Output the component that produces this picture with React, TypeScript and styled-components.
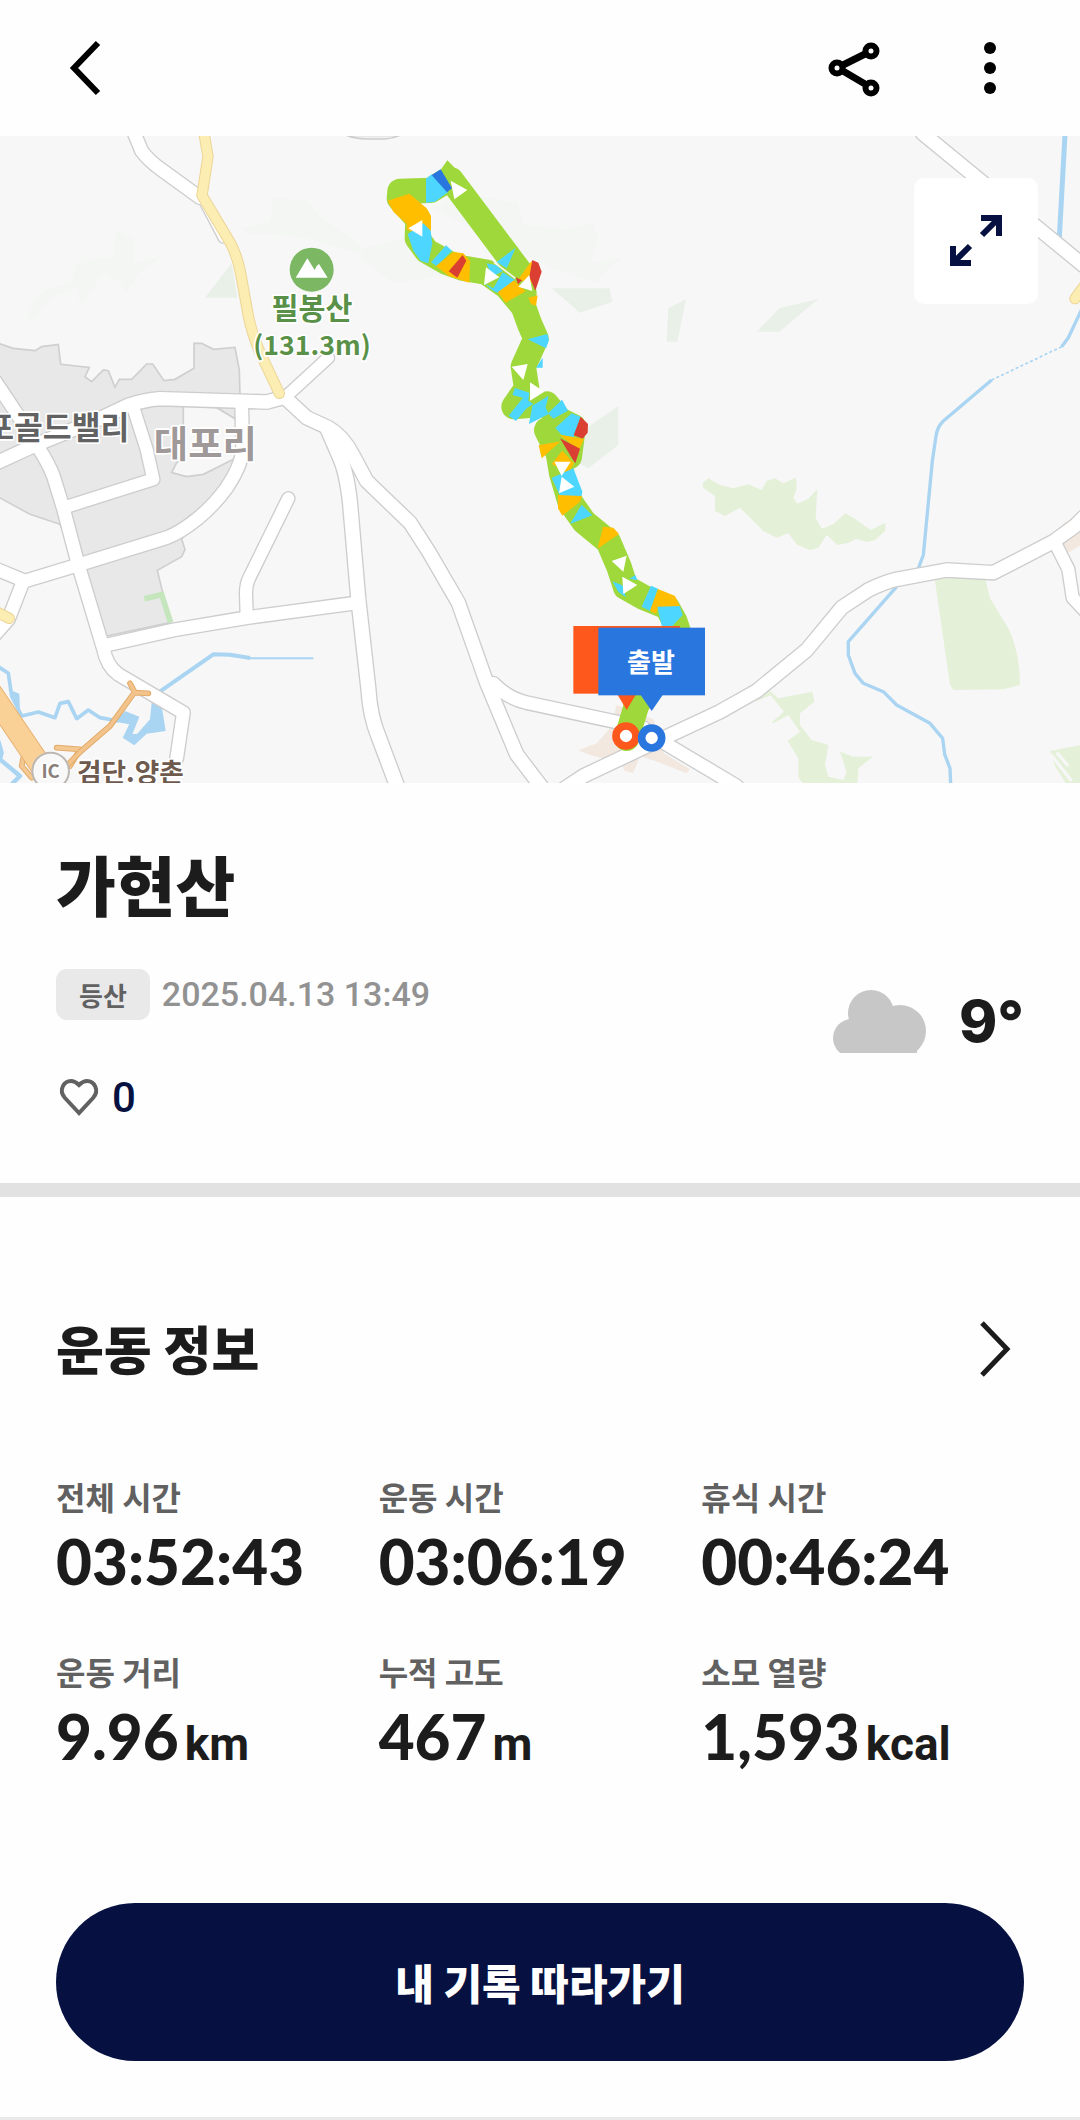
import React from "react";
import styled, { createGlobalStyle } from "styled-components";

const GlobalStyle = createGlobalStyle`
  * { box-sizing: border-box; }
  body {
    margin: 0;
    background: #fefefe;
    color: #1c1c1c;
    font-family: "Noto Sans CJK KR", "Noto Sans", sans-serif;
  }
  h1, h2, p, dl, dt, dd { margin: 0; }
  button {
    border: 0;
    padding: 0;
    background: none;
    color: inherit;
    font: inherit;
    cursor: pointer;
  }
  svg { display: block; }
`;

const Page = styled.div`
  border-bottom: 3px solid #e9e9e9;
`;

const Header = styled.header`
  display: flex;
  align-items: center;
  justify-content: space-between;
  height: 136px;
  padding: 0 56px;
`;

const HeaderActions = styled.div`
  display: flex;
  gap: 72px;
`;

const IconButton = styled.button`
  width: 64px;
  height: 64px;
`;

const MapPanel = styled.section`
  position: relative;
`;

const MapDrawing = styled.svg`
  width: 100%;
  height: auto;
  background: #f7f7f7;
`;

const ExpandButton = styled.button`
  position: absolute;
  top: 42px;
  right: 42px;
  display: grid;
  place-items: center;
  width: 124px;
  height: 126px;
  border-radius: 10px;
  background: #ffffff;
`;

const Summary = styled.section`
  padding: 60px 56px 61px;
  border-bottom: 14px solid #e2e2e2;
`;

const Title = styled.h1`
  font-size: 65px;
  line-height: 80px;
  font-weight: 900;
`;

const SummaryBody = styled.div`
  display: flex;
  justify-content: space-between;
  align-items: flex-start;
  margin-top: 46px;
`;

const MetaRow = styled.div`
  display: flex;
  align-items: center;
  gap: 12px;
`;

const Badge = styled.span`
  padding: 0 23px;
  border-radius: 11px;
  background: #e9e9e9;
  color: #616161;
  font-size: 26px;
  line-height: 51px;
  font-weight: 700;
`;

const DateText = styled.time`
  color: #929292;
  font-family: Roboto, sans-serif;
  font-size: 34px;
  line-height: 51px;
  font-weight: 500;
`;

const LikeButton = styled.button`
  display: flex;
  align-items: center;
  gap: 10px;
  margin-top: 54px;
  color: #061141;
  font-family: Roboto, sans-serif;
  font-size: 42px;
  line-height: 48px;
  font-weight: 500;
`;

const Weather = styled.div`
  display: flex;
  align-items: center;
  gap: 32px;
  padding-top: 20px;
  font-family: Inter, sans-serif;
  font-size: 58px;
  line-height: 64px;
  font-weight: 800;
`;

const Workout = styled.section`
  padding: 121px 56px 56px;
`;

const WorkoutHead = styled.div`
  display: flex;
  align-items: center;
  justify-content: space-between;
`;

const Heading = styled.h2`
  font-size: 52px;
  line-height: 60px;
  font-weight: 900;
`;

const MoreButton = styled.button`
  width: 60px;
  height: 60px;
`;

const Stats = styled.dl`
  display: grid;
  grid-template-columns: repeat(3, 1fr);
  row-gap: 55px;
  margin-top: 95px;
`;

const StatLabel = styled.dt`
  color: #616161;
  font-size: 32px;
  line-height: 46px;
  font-weight: 700;
`;

const StatValue = styled.dd`
  display: flex;
  align-items: baseline;
  gap: 6px;
  height: 64px;
  margin-top: 10px;
  font-family: Lato, sans-serif;
  font-size: 62px;
  line-height: 64px;
  font-weight: 900;
`;

const Unit = styled.span`
  font-family: Roboto, sans-serif;
  font-size: 46px;
  line-height: 48px;
  font-weight: 700;
`;

const FollowButton = styled.button`
  width: 100%;
  margin-top: 135px;
  border-radius: 79px;
  background: #061141;
  color: #ffffff;
  font-size: 42px;
  line-height: 158px;
  font-weight: 900;
`;

const MapLabel = styled.text<{ $size: number; $tone: string; $weight: number }>`
  font-family: "Noto Sans CJK KR", sans-serif;
  font-size: ${(p) => p.$size}px;
  font-weight: ${(p) => p.$weight};
  fill: ${(p) => p.$tone};
  stroke: #ffffff;
  stroke-width: 10px;
  stroke-linejoin: round;
  paint-order: stroke;
`;

const FlagLabel = styled.text`
  font-family: "Noto Sans CJK KR", sans-serif;
  font-size: 78px;
  font-weight: 700;
  fill: #ffffff;
`;

const stats = [
  { label: "전체 시간", value: "03:52:43" },
  { label: "운동 시간", value: "03:06:19" },
  { label: "휴식 시간", value: "00:46:24" },
  { label: "운동 거리", value: "9.96", unit: "km" },
  { label: "누적 고도", value: "467", unit: "m" },
  { label: "소모 열량", value: "1,593", unit: "kcal" },
];

const roads: { d: string; width: number }[] = [
  { d: "M400 -15 L425 45 Q445 72 480 98 L600 185", width: 38 },
  { d: "M604 186 L668 308", width: 22 },
  { d: "M865 775 L985 665", width: 34 },
  { d: "M-20 985 L110 925 L300 848 L385 808 Q430 792 480 788 L800 798 L860 782", width: 40 },
  { d: "M855 785 L920 845 L985 875 Q1030 900 1060 960 L1100 1035 L1230 1160 L1285 1245 L1375 1400 L1460 1640 L1550 1855 L1630 1960", width: 40 },
  { d: "M985 885 L1020 965 Q1040 1010 1050 1100 L1075 1390 L1105 1657 Q1110 1740 1135 1800 L1195 1960", width: 42 },
  { d: "M725 800 L728 940 Q724 990 680 1055 Q640 1110 590 1150 Q540 1190 500 1205 L240 1285 L75 1335 L-10 1300", width: 38 },
  { d: "M70 1335 L25 1450 L-15 1495", width: 38 },
  { d: "M-15 735 L55 840 L115 935 Q145 980 160 1020 L190 1117 L235 1287 L310 1537 Q320 1590 355 1615 L550 1730 L530 1867", width: 38 },
  { d: "M400 815 L440 940 L460 1030 L200 1112", width: 36 },
  { d: "M320 1527 L520 1482 L740 1445 L1075 1400", width: 38 },
  { d: "M865 1087 L748 1325 Q738 1345 738 1370 L740 1440", width: 36 },
  { d: "M1480 1642 Q1520 1685 1580 1700 L1930 1775", width: 38 },
  { d: "M1690 1960 L1750 1920 L1940 1830 L2160 1727 L2270 1665 L2420 1542 L2525 1415 L2605 1362 Q2650 1340 2690 1330 L2840 1302 L2980 1310 L3160 1217 L3225 1170 L3260 1135", width: 40 },
  { d: "M1950 1795 L2210 1950", width: 38 },
  { d: "M3165 1220 L3205 1300 L3218 1385 L3260 1430", width: 36 },
  { d: "M2768 -8 L3250 388", width: 40 },
];

const palette = {
  green: "#9fd83a",
  cyan: "#4dd6ff",
  orange: "#ffbe00",
  red: "#da3f31",
  blue: "#2976df",
};

const routePatches: { fill: keyof typeof palette; points: string }[] = [
  { fill: "orange", points: "83,212 148,191 200,235 213,258 213,300 180,310 140,300 140,282 100,245" },
  { fill: "cyan", points: "198,146 215,133 264,187 225,215 198,218" },
  { fill: "blue", points: "215,135 242,118 276,175 261,187" },
  { fill: "cyan", points: "143,312 190,280 212,302 217,340 205,400 182,393 160,362" },
  { fill: "cyan", points: "213,397 258,346 276,362 230,409" },
  { fill: "orange", points: "228,408 280,366 310,370 330,393 328,458 266,438" },
  { fill: "red", points: "266,424 308,375 319,392 292,443" },
  { fill: "cyan", points: "380,400 410,406 428,424 395,440" },
  { fill: "cyan", points: "372,460 400,483 420,491 465,450 428,427 400,475" },
  { fill: "orange", points: "413,487 462,451 497,484 437,518" },
  { fill: "cyan", points: "410,396 467,353 440,415" },
  { fill: "orange", points: "474,449 515,392 520,460" },
  { fill: "red", points: "517,390 535,398 545,425 526,482 508,440" },
  { fill: "red", points: "467,442 486,451 474,463" },
  { fill: "orange", points: "505,503 533,496 528,527 513,522" },
  { fill: "cyan", points: "503,628 562,612 567,630 558,655" },
  { fill: "cyan", points: "528,713 548,683 548,713" },
  { fill: "cyan", points: "465,774 508,788 505,812 520,822 500,835 468,873 446,857 489,803 457,795" },
  { fill: "cyan", points: "517,827 566,797 557,832 566,852 507,882" },
  { fill: "cyan", points: "564,850 606,809 624,842 580,866" },
  { fill: "cyan", points: "586,894 635,850 662,860 641,921 605,915" },
  { fill: "red", points: "662,860 684,882 683,908 668,926 641,916" },
  { fill: "orange", points: "598,914 672,927 657,960" },
  { fill: "orange", points: "536,946 602,934 545,985" },
  { fill: "orange", points: "575,1002 607,962 642,1000 625,1030" },
  { fill: "red", points: "600,925 660,956 646,1000 636,985" },
  { fill: "cyan", points: "575,1044 640,1015 667,1085 664,1100 600,1097" },
  { fill: "orange", points: "594,1095 666,1098 660,1116 607,1157 594,1135" },
  { fill: "cyan", points: "630,1182 665,1124 697,1156" },
  { fill: "orange", points: "713,1256 729,1190 760,1193 777,1212" },
  { fill: "cyan", points: "757,1354 787,1366 798,1402 775,1386" },
  { fill: "cyan", points: "808,1346 826,1335 832,1351" },
  { fill: "cyan", points: "845,1430 873,1367 894,1376 870,1443" },
  { fill: "orange", points: "870,1442 894,1377 945,1398 960,1430 895,1432 888,1452" },
  { fill: "cyan", points: "892,1430 959,1428 968,1455 935,1490 905,1487" },
];

const arrows = [
  "272,152 322,180 283,208",
  "145,295 187,270 187,320",
  "378,412 418,442 372,465",
  "475,470 508,435 517,483",
  "455,710 503,702 490,750",
  "510,757 553,785 510,812",
  "583,995 632,995 605,1038",
  "605,1040 643,1070 597,1090",
  "755,1293 800,1277 790,1325",
  "787,1340 832,1365 790,1392",
];

function Terrain() {
  return (
    <g>
      <g fill="#f3f6f3">
        <path d="M80 545 L110 482 L160 452 L212 442 L235 377 L338 362 L350 282 L405 312 L400 382 L492 357 L415 412 L380 470 L352 432 L310 410 L242 514 L232 455 L150 485 L100 552Z" />
        <path d="M725 275 L810 257 L820 187 L920 192 L960 242 L1080 325 L1080 352 L900 302 L740 290Z" />
        <path d="M1295 215 L1400 172 L1550 200 L1575 270 L1700 280 L1780 262 L1795 312 L1770 380 L1865 365 L1820 405 L1790 440 L1660 400Z" />
        <path d="M1080 340 L1210 310 L1230 350 L1330 420 L1180 440 L1085 370Z" />
      </g>
      <g fill="#e9f0e8">
        <path d="M615 485 L695 382 L712 485Z" />
        <path d="M1655 457 L1828 457 L1837 497 L1740 530Z" />
        <path d="M2005 517 L2058 489 L2032 617 L2000 617Z" />
        <path d="M2270 587 L2338 517 L2455 489 L2338 587Z" />
        <path d="M1765 872 L1855 810 L1855 927 L1765 997 L1735 980Z" />
      </g>
      <path
        d="M-10 620 L40 637 L105 644 L125 632 L175 625 L182 685 L268 694 L255 722 L275 737 L310 702 L325 704 L345 754 L358 730 L395 730 L440 684 L458 684 L492 734 L525 730 L582 697 L582 622 L605 622 L640 640 L705 634 L718 702 L720 780 L708 850 L650 815 L550 810 L550 970 L530 980 L515 1010 L560 1022 L610 1015 L700 970 L680 1055 L590 1150 L545 1210 L555 1240 L545 1262 L472 1303 L510 1460 L320 1500 L180 1165 L90 1135 L-10 1080Z"
        fill="#e8e8e8"
        stroke="#cfcfcf"
        strokeWidth="5"
      />
      <path d="M433 1388 L485 1376 L512 1460" fill="none" stroke="#c5e6bd" strokeWidth="17" />
      <g fill="#e4f0d8">
        <path d="M2107 1043 L2125 1027 L2160 1047 L2200 1057 L2245 1045 L2285 1062 L2300 1035 L2325 1027 L2350 1042 L2388 1025 L2390 1060 L2380 1085 L2392 1103 L2425 1088 L2452 1060 L2447 1145 L2465 1178 L2500 1165 L2535 1132 L2560 1145 L2612 1182 L2657 1160 L2655 1185 L2625 1212 L2600 1218 L2570 1208 L2545 1220 L2512 1227 L2480 1197 L2455 1235 L2430 1243 L2390 1225 L2365 1192 L2330 1205 L2290 1185 L2220 1115 L2175 1140 L2145 1125 L2145 1080 L2110 1055Z" />
        <path d="M2803 1320 L2955 1325 L2970 1387 L3025 1477 Q3060 1550 3060 1647 L3010 1660 L2860 1662 L2850 1647Z" />
        <path d="M2265 1697 L2310 1665 L2335 1687 L2437 1667 L2443 1697 L2400 1732 L2400 1767 L2435 1812 L2485 1827 L2475 1887 L2485 1922 L2530 1932 L2540 1907 L2520 1847 L2560 1862 L2618 1862 L2575 1897 L2572 1945 L2410 1945 L2395 1922 L2395 1867 L2363 1815 L2400 1787 L2365 1737 L2320 1762 L2316 1758 L2352 1727 L2312 1678Z" />
        <path d="M3150 1845 L3240 1828 L3240 1945 L3200 1945 L3165 1890Z" />
      </g>
      <path d="M3152 1855 L3215 1935 M3170 1850 L3205 1890" stroke="#f7f7f7" strokeWidth="10" fill="none" />
      <g fill="#f3e8df">
        <path d="M1735 1843 L1790 1822 L1830 1777 L1850 1707 L1960 1750 L1990 1850 L2070 1900 L2060 1912 L1980 1880 L1920 1860 L1900 1910 L1875 1905 L1860 1880 L1770 1857Z" />
        <path d="M3180 1220 L3190 1160 L3245 1140 L3245 1225 L3205 1250Z" />
      </g>
    </g>
  );
}

function Rivers() {
  return (
    <g fill="none" stroke="#a9d4f2" strokeWidth="10" strokeLinejoin="round">
      <path d="M3195 -5 L3178 305" strokeWidth="15" />
      <path d="M3245 520 L3205 605 L3185 632" />
      <path d="M3185 632 L2975 732" strokeWidth="5" strokeDasharray="9 7" />
      <path d="M2975 732 L2830 855 Q2812 872 2808 900 L2797 975 L2770 1257 L2752 1305" />
      <path d="M2690 1352 L2545 1517 L2545 1557 L2565 1612 L2590 1642 L2650 1667 L2690 1707 L2790 1762 L2828 1807 L2834 1855 L2850 1897 L2852 1945" />
      <path d="M475 1670 L640 1555 L690 1556 L750 1566" strokeWidth="12" />
      <path d="M745 1567 L940 1567" strokeWidth="6" />
      <path d="M-5 1592 L25 1612 L35 1680 L65 1740 L115 1728 L165 1745 L180 1702 L205 1697 L230 1748 L265 1722 L300 1745 L355 1755" strokeWidth="11" />
      <path d="M25 1660 L58 1673 L60 1725Z" fill="#a9d4f2" stroke="none" />
      <path d="M375 1725 L418 1742 L397 1795 L412 1793 L450 1750 L455 1700 L485 1710 L497 1785 L440 1793 L403 1828 L368 1805 L388 1765 L345 1757Z" fill="#a9d4f2" stroke="none" />
      <path d="M-5 1815 L5 1850 L0 1870 L60 1920 L35 1945" strokeWidth="13" />
    </g>
  );
}

function Highways() {
  return (
    <g fill="none" strokeLinecap="round" strokeLinejoin="round">
      <path d="M75 1840 L65 1890 L95 1925 M170 1835 L240 1840 L210 1890" stroke="#e3ab6a" strokeWidth="17" />
      <path d="M75 1840 L65 1890 L95 1925 M170 1835 L240 1840 L210 1890" stroke="#f4c891" strokeWidth="11" />
      <path d="M390 1642 L405 1670 L445 1672 M405 1667 L330 1770 L240 1848 L200 1890" stroke="#e3ab6a" strokeWidth="17" />
      <path d="M390 1642 L405 1670 L445 1672 M405 1667 L330 1770 L240 1848 L200 1890" stroke="#f2c48b" strokeWidth="11" />
      <path d="M-30 1665 L140 1915" stroke="#e9b272" strokeWidth="68" />
      <path d="M-30 1665 L140 1915" stroke="#f9d197" strokeWidth="62" />
      <path d="M610 -20 L624 62 L606 178 L692 322 Q712 360 722 412 L745 540 Q755 590 778 645 L838 772" stroke="#ecd596" strokeWidth="34" />
      <path d="M610 -20 L624 62 L606 178 L692 322 Q712 360 722 412 L745 540 Q755 590 778 645 L838 772" stroke="#fcedb2" strokeWidth="28" />
      <path d="M-20 1423 L28 1447 M3225 488 L3260 440" stroke="#ecd596" strokeWidth="34" />
      <path d="M-20 1423 L28 1447 M3225 488 L3260 440" stroke="#fcedb2" strokeWidth="28" />
    </g>
  );
}

function Route() {
  return (
    <g transform="translate(1080 -18)">
      <g fill="none" stroke={palette.green} strokeWidth="76" strokeLinecap="round" strokeLinejoin="round">
        <path d="M274 150 L480 425 L492 490" />
        <path d="M255 155 L212 181 L120 184 L118 205 L174 268 L172 325 L200 363 L262 398 L310 415 L380 427 L440 470 L490 530 L510 585 L528 625 L490 710 L500 775 L462 830 L560 822 L600 870 L640 890 L628 980 L560 900 L595 970 L605 1030 L630 1115 L672 1175 L745 1235 L777 1310 L797 1372 L850 1402 L920 1430 L945 1475 L960 1520 L900 1620 L830 1725 L800 1825" />
      </g>
      <path d="M262 91 L236 128 L300 130Z" fill={palette.green} />
      {routePatches.map((patch) => (
        <polygon key={patch.points} points={patch.points} fill={palette[patch.fill]} />
      ))}
      <path d="M402 397 L466 445" stroke="#f7f7f7" strokeWidth="5" />
      {arrows.map((points) => (
        <polygon key={points} points={points} fill="#ffffff" />
      ))}
      <g fill="#ff581d">
        <rect x="640" y="1488" width="320" height="203" />
        <path d="M770 1690 L830 1690 L800 1740Z" />
      </g>
      <g fill={palette.blue}>
        <rect x="715" y="1493" width="320" height="203" />
        <path d="M842 1695 L908 1695 L875 1743Z" />
      </g>
      <circle cx="798" cy="1818" r="30" fill="#ffffff" stroke="#ff581d" strokeWidth="23" />
      <circle cx="875" cy="1824" r="30" fill="#ffffff" stroke={palette.blue} strokeWidth="23" />
      <FlagLabel x="873" y="1627" textAnchor="middle">출발</FlagLabel>
    </g>
  );
}

function TrailMap() {
  return (
    <MapDrawing viewBox="0 0 3240 1941" role="img" aria-label="가현산 등산 경로 지도">
      <Terrain />
      <Rivers />
      <g fill="none" stroke="#cdcdcd" strokeLinejoin="round" strokeLinecap="round">
        {roads.map((road) => (
          <path key={road.d} d={road.d} strokeWidth={road.width + 8} />
        ))}
      </g>
      <g fill="none" stroke="#ffffff" strokeLinejoin="round" strokeLinecap="round">
        {roads.map((road) => (
          <path key={road.d} d={road.d} strokeWidth={road.width} />
        ))}
      </g>
      <path d="M1040 -2 Q1065 9 1100 9 L1155 9 Q1180 7 1200 -2Z" fill="#f0f0f0" stroke="#cdcdcd" strokeWidth="5" />
      <Highways />
      <circle cx="152" cy="1905" r="55" fill="#f8f8f8" stroke="#bdb8b4" strokeWidth="6" />
      <MapLabel x="152" y="1926" textAnchor="middle" $size={56} $tone="#8a7f79" $weight={700}>IC</MapLabel>
      <MapLabel x="231" y="1939" $size={80} $tone="#6f5a4e" $weight={700}>검단.양촌</MapLabel>
      <MapLabel x="388" y="909" textAnchor="end" $size={94} $tone="#626262" $weight={700}>포골드밸리</MapLabel>
      <MapLabel x="616" y="966" textAnchor="middle" $size={112} $tone="#a09999" $weight={700}>대포리</MapLabel>
      <circle cx="935" cy="401" r="66" fill="#7cb863" />
      <path d="M887 425 L922 367 L944 402 L950 390 L957 384 L983 425Z" fill="#ffffff" />
      <MapLabel x="936" y="549" textAnchor="middle" $size={88} $tone="#5a9148" $weight={700}>필봉산</MapLabel>
      <MapLabel x="936" y="658" textAnchor="middle" $size={80} $tone="#5a9148" $weight={700}>(131.3m)</MapLabel>
      <Route />
    </MapDrawing>
  );
}

function BackIcon() {
  return (
    <svg width="64" height="64" viewBox="0 0 64 64" fill="none" stroke="#000000" strokeWidth="6">
      <path d="M42 7 L18 32 L42 57" />
    </svg>
  );
}

function ShareIcon() {
  return (
    <svg width="64" height="64" viewBox="0 0 64 64" fill="none" stroke="#000000">
      <path d="M19 29 L41 18 M19 35 L41 48" strokeWidth="7" />
      <circle cx="13" cy="32" r="5.5" strokeWidth="6" />
      <circle cx="47" cy="15" r="5.5" strokeWidth="6" />
      <circle cx="47" cy="52" r="5.5" strokeWidth="6" />
    </svg>
  );
}

function MoreIcon() {
  return (
    <svg width="64" height="64" viewBox="0 0 64 64" fill="#000000">
      <circle cx="30" cy="12" r="6" />
      <circle cx="30" cy="32" r="6" />
      <circle cx="30" cy="52" r="6" />
    </svg>
  );
}

function ExpandIcon() {
  return (
    <svg width="52" height="52" viewBox="0 0 52 52" fill="none" stroke="#061141" strokeWidth="6">
      <path d="M31 3 H49 V21 M48 4 L32 20 M3 31 V48 H21 M4 47 L20 31" />
    </svg>
  );
}

function HeartIcon() {
  return (
    <svg width="46" height="46" viewBox="0 0 46 46" fill="none" stroke="#616161" strokeWidth="4">
      <path d="M23 38 L9 23 C2 15 8 6 15 6 C19 6 21 8 23 10 C25 8 27 6 31 6 C38 6 44 15 37 23 Z" />
    </svg>
  );
}

function CloudIcon() {
  return (
    <svg width="94" height="64" viewBox="0 0 94 64" fill="#c7c7c7">
      <circle cx="19" cy="49" r="19" />
      <circle cx="38" cy="24" r="23" />
      <circle cx="67" cy="42" r="26" />
      <path d="M8 64 L19 40 H67 L84 62 V64 Z" />
    </svg>
  );
}

function ChevronRightIcon() {
  return (
    <svg width="60" height="60" viewBox="0 0 60 60" fill="none" stroke="#1c1c1c" strokeWidth="5">
      <path d="M18 5 L43 31 L18 57" />
    </svg>
  );
}

export default function App() {
  return (
    <Page>
      <GlobalStyle />
      <Header>
        <IconButton type="button" aria-label="뒤로">
          <BackIcon />
        </IconButton>
        <HeaderActions>
          <IconButton type="button" aria-label="공유">
            <ShareIcon />
          </IconButton>
          <IconButton type="button" aria-label="더보기">
            <MoreIcon />
          </IconButton>
        </HeaderActions>
      </Header>
      <main>
        <MapPanel>
          <TrailMap />
          <ExpandButton type="button" aria-label="지도 확대">
            <ExpandIcon />
          </ExpandButton>
        </MapPanel>
        <Summary>
          <Title>가현산</Title>
          <SummaryBody>
            <div>
              <MetaRow>
                <Badge>등산</Badge>
                <DateText dateTime="2025-04-13T13:49">2025.04.13 13:49</DateText>
              </MetaRow>
              <LikeButton type="button" aria-label="좋아요 0">
                <HeartIcon />
                <span>0</span>
              </LikeButton>
            </div>
            <Weather>
              <CloudIcon />
              <span>9°</span>
            </Weather>
          </SummaryBody>
        </Summary>
        <Workout>
          <WorkoutHead>
            <Heading>운동 정보</Heading>
            <MoreButton type="button" aria-label="운동 정보 자세히">
              <ChevronRightIcon />
            </MoreButton>
          </WorkoutHead>
          <Stats>
            {stats.map((stat) => (
              <div key={stat.label}>
                <StatLabel>{stat.label}</StatLabel>
                <StatValue>
                  <span>{stat.value}</span>
                  {stat.unit && <Unit>{stat.unit}</Unit>}
                </StatValue>
              </div>
            ))}
          </Stats>
          <FollowButton type="button">내 기록 따라가기</FollowButton>
        </Workout>
      </main>
    </Page>
  );
}
